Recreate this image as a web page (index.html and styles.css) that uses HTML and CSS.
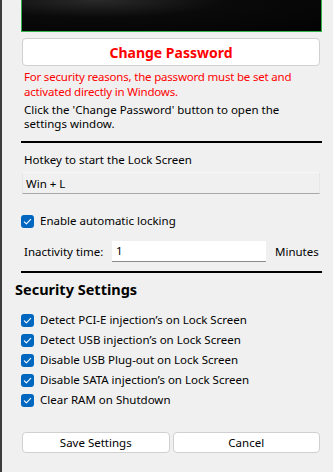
FILE: index.html
```html
<!DOCTYPE html>
<html>
<head>
<meta charset="utf-8">
<link rel="stylesheet" href="styles.css">
</head>
<body>
<div class="window">
  <div class="preview"></div>
  <button class="btn btn-change">Change Password</button>
  <p class="note red">For security reasons, the password must be set and<br>activated directly in Windows.</p>
  <p class="note">Click the 'Change Password' button to open the<br>settings window.</p>
  <hr class="sep sep-1">
  <div class="label">Hotkey to start the Lock Screen</div>
  <div class="hotkey">Win + L</div>
  <label class="check check-auto"><span class="box"><svg viewBox="0 0 13 13" width="13" height="13"><path d="M3.3 6.8 L5.4 8.8 L9.7 4.4" fill="none" stroke="#fff" stroke-width="1.1" stroke-linecap="round" stroke-linejoin="round"/></svg></span>Enable automatic locking</label>
  <div class="inactivity">
    <span class="inact-label">Inactivity time:</span>
    <span class="inact-input">1</span>
    <span class="inact-unit">Minutes</span>
  </div>
  <hr class="sep sep-2">
  <h2 class="heading">Security Settings</h2>
  <div class="checks">
    <label class="check"><span class="box"><svg viewBox="0 0 13 13" width="13" height="13"><path d="M3.3 6.8 L5.4 8.8 L9.7 4.4" fill="none" stroke="#fff" stroke-width="1.1" stroke-linecap="round" stroke-linejoin="round"/></svg></span>Detect PCI-E injection’s on Lock Screen</label>
    <label class="check"><span class="box"><svg viewBox="0 0 13 13" width="13" height="13"><path d="M3.3 6.8 L5.4 8.8 L9.7 4.4" fill="none" stroke="#fff" stroke-width="1.1" stroke-linecap="round" stroke-linejoin="round"/></svg></span>Detect USB injection’s on Lock Screen</label>
    <label class="check"><span class="box"><svg viewBox="0 0 13 13" width="13" height="13"><path d="M3.3 6.8 L5.4 8.8 L9.7 4.4" fill="none" stroke="#fff" stroke-width="1.1" stroke-linecap="round" stroke-linejoin="round"/></svg></span>Disable USB Plug-out on Lock Screen</label>
    <label class="check"><span class="box"><svg viewBox="0 0 13 13" width="13" height="13"><path d="M3.3 6.8 L5.4 8.8 L9.7 4.4" fill="none" stroke="#fff" stroke-width="1.1" stroke-linecap="round" stroke-linejoin="round"/></svg></span>Disable SATA injection’s on Lock Screen</label>
    <label class="check"><span class="box"><svg viewBox="0 0 13 13" width="13" height="13"><path d="M3.3 6.8 L5.4 8.8 L9.7 4.4" fill="none" stroke="#fff" stroke-width="1.1" stroke-linecap="round" stroke-linejoin="round"/></svg></span>Clear RAM on Shutdown</label>
  </div>
  <div class="actions">
    <button class="btn btn-small">Save Settings</button>
    <button class="btn btn-small">Cancel</button>
  </div>
</div>
</body>
</html>
```

FILE: styles.css
```css
* { box-sizing: border-box; }
html, body {
  margin: 0;
  padding: 0;
  width: 333px;
  height: 472px;
  overflow: hidden;
  background: #f0f0f0;
}
body {
  font-family: "Noto Sans", "Liberation Sans", Arial, sans-serif;
  font-size: 11.5px;
  color: #000;
}
.window {
  height: 472px;
  border-left: 2px solid #3c3c3c;
  padding: 0 11px 0 19px;
  display: flex;
  flex-direction: column;
}
.preview {
  height: 32px;
  background: radial-gradient(ellipse at 25% 0%, #2a2a2a 0%, #0a0a0a 40%, #030303 100%);
  border: 1px solid #32b44a;
  border-top: none;
  flex-shrink: 0;
}
.btn {
  font-family: inherit;
  background: #fff;
  border: 1px solid #d0d0d0;
  border-radius: 4px;
  color: #000;
  padding: 0;
  cursor: default;
}
.btn-change {
  margin: 6px 2px 0 1px;
  height: 28px;
  color: #ff0000;
  font-weight: bold;
  font-size: 14px;
}
.note {
  margin: 3px 0 0 3px;
  line-height: 15px;
  white-space: nowrap;
}
.note.red { color: #ff0000; letter-spacing: -0.2px; }
.note + .note { margin-top: 4px; line-height: 14px; }
.sep {
  margin: 10px 0 0 0;
  border: none;
  height: 2px;
  background: #000;
}
.label {
  margin: 9px 0 0 3px;
  line-height: 15px;
}
.hotkey {
  margin: 5px 2px 0 1px;
  height: 22px;
  line-height: 21px;
  padding-left: 3px;
  background: #f0f0f0;
  border: 1px solid #e6e6e6;
  border-top-color: #f8f8f8;
  border-bottom: 1px solid #a8a8a8;
}
.check {
  display: flex;
  align-items: center;
  height: 20px;
  line-height: 16px;
}
.box {
  width: 13px;
  height: 13px;
  border-radius: 3px;
  background: #0067c0;
  margin-right: 6px;
  display: flex;
}
.check-auto { margin-top: 17px; }
.inactivity {
  margin-top: 10px;
  display: flex;
  align-items: center;
  height: 21px;
}
.inact-label { margin-left: 3px; width: 88px; }
.inact-input {
  width: 154px;
  height: 21px;
  line-height: 20px;
  background: #fff;
  border-bottom: 1px solid #8a8a8a;
  padding-left: 4px;
}
.inact-unit { margin-left: 9px; }
.sep-2 { margin-top: 9px; }
.heading {
  margin: 7px 0 0 -6px;
  font-size: 14.5px;
  line-height: 18px;
  font-weight: bold;
}
.checks {
  margin-top: 12px;
  display: flex;
  flex-direction: column;
}
.actions {
  margin: 22px 2px 0 1px;
  display: flex;
  gap: 3px;
}
.btn-small {
  flex: 1;
  height: 21px;
  font-size: 11.5px;
}
```
